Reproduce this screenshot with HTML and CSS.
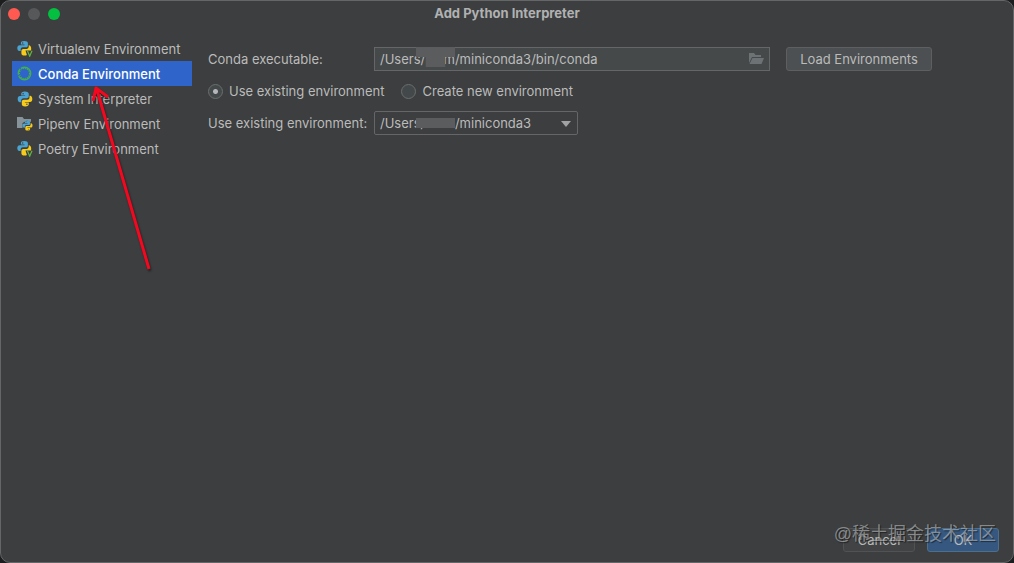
FILE: index.html
```
<!DOCTYPE html>
<html lang="en">
<head>
    <meta charset="UTF-8" />
    <meta name="viewport" content="width=device-width, initial-scale=1.0"/>
    <title>Add Python Interpreter</title>
    <link rel="stylesheet" href="styles.css">
</head>
<body>

    <!-- shared icon shapes -->
    <svg class="icon-defs" aria-hidden="true">
        <symbol id="python" viewBox="0 0 16 16">
            <path fill="#4aa3d0" d="M7.8.6C5.200.6 4.200 1.500 4.200 3v1.500h3.900v.6H3C1.500 5.100.7 6.400.7 8.100c0 1.800.8 3.200 2.200 3.200h1.300V9.600c0-1.300 1-2.300 2.300-2.300h3.300c1.200 0 2-.8 2-2V3C11.800 1.500 10.500.6 7.800.6z"/>
            <path fill="#f7cb1b" d="M8.200 15.400c2.600 0 3.600-.9 3.600-2.400v-1.500H7.900v-.6H13c1.500 0 2.300-1.300 2.300-3 0-1.800-.8-3.200-2.200-3.200h-.6v1.700c0 1.300-1 2.300-2.300 2.300H6.800c-1.200 0-2 .8-2 2V13c0 1.500.8 2.400 3.400 2.400z"/>
            <circle cx="6.100" cy="2.700" r=".7" fill="#3c3e3f"/>
            <circle cx="9.900" cy="13.300" r=".7" fill="#3c3e3f"/>
        </symbol>
        <symbol id="python-v" viewBox="0 0 16 16">
            <path fill="#4aa3d0" d="M7.200 0C4.700 0 3.900.9 3.900 2.200v1.400h3.600v.6H2.600C1.200 4.200.3 5.400.3 7c0 1.700.8 3 2.100 3h1.300V8.300c0-1.200.9-2.100 2.200-2.100h3.200c1.100 0 1.800-.8 1.800-1.800V2.200C10.900.8 9.700 0 7.200 0z"/>
            <path fill="#f7cb1b" d="M11.700 4.200v1.600c0 1.200-.9 2.200-2.200 2.200H6.300c-1.100 0-1.900.8-1.900 1.900v2.300c0 1.400 1 2.300 3.200 2.300.9 0 1.700-.1 2.300-.5L8.500 9.600h5.400c.2-.6.3-1.300.3-2.200 0-1.900-.9-3.200-2.500-3.200z"/>
            <circle cx="5.700" cy="2" r=".7" fill="#3c3e3f"/>
            <path fill="none" stroke="#62b543" stroke-width="1.200" d="M10.400 9.800l2.300 5.400L15 9.800"/>
        </symbol>
        <symbol id="conda" viewBox="0 0 16 16">
            <circle cx="7.500" cy="7.500" r="6.200" fill="none" stroke="#43b049" stroke-width="1.400"/>
            <circle cx="7.500" cy="7.500" r="5.200" fill="none" stroke="#43b049" stroke-width="1.400" stroke-dasharray="1.200 1"/>
            <path fill="none" stroke="#2f65ca" stroke-width="1" d="M3 2l1.500 2M1 9.500l2-.6"/>
        </symbol>
        <symbol id="pipenv" viewBox="0 0 16 16">
            <path fill="#87939a" d="M0 1h5.500L7 3h7v3L10 4.500 5.500 7v5H0z"/>
            <svg x="5" y="4" width="11" height="11"><use href="#python"/></svg>
        </symbol>
    </svg>

    <div class="dialog">
        <header class="titlebar">
            <div class="lights">
                <button class="light close" aria-label="Close"></button>
                <button class="light minimize" aria-label="Minimize" disabled></button>
                <button class="light zoom" aria-label="Zoom"></button>
            </div>
            <h1>Add Python Interpreter</h1>
        </header>

        <main class="content">
            <nav class="env-list">
                <a href="#virtualenv"><svg class="icon"><use href="#python-v"/></svg>Virtualenv Environment</a>
                <a href="#conda-env" class="selected"><svg class="icon"><use href="#conda"/></svg>Conda Environment</a>
                <a href="#system"><svg class="icon"><use href="#python"/></svg>System Interpreter</a>
                <a href="#pipenv-env"><svg class="icon"><use href="#pipenv"/></svg>Pipenv Environment</a>
                <a href="#poetry"><svg class="icon"><use href="#python-v"/></svg>Poetry Environment</a>
                <svg class="arrow" viewBox="0 0 70 190" aria-hidden="true">
                    <path d="M61 188L9 9M5 20L8 7l12 9"/>
                </svg>
            </nav>

            <form class="settings">
                <div class="row">
                    <label class="name" for="executable">Conda executable:</label>
                    <div class="field path">
                        <input type="text" id="executable" value="/Users/&nbsp;&nbsp;&nbsp;&nbsp;&nbsp;m/miniconda3/bin/conda">
                        <span class="smudge tall"></span>
                        <svg class="folder" viewBox="0 0 16 16" aria-hidden="true">
                            <path fill="#6d7375" d="M1 2h5l1.500 2H13v2H4l-3 6z"/>
                            <path fill="#6d7375" d="M4.500 7H16l-2.500 6H1.500z"/>
                        </svg>
                    </div>
                    <button type="button" class="button load">Load Environments</button>
                </div>

                <div class="row radios">
                    <label><input type="radio" name="mode" checked>Use existing environment</label>
                    <label><input type="radio" name="mode">Create new environment</label>
                </div>

                <div class="row">
                    <label class="name" for="existing">Use existing environment:</label>
                    <div class="field combo">
                        <select id="existing">
                            <option>/Users/&nbsp;&nbsp;&nbsp;&nbsp;&nbsp;m/miniconda3</option>
                        </select>
                        <span class="smudge"></span>
                        <svg class="caret" viewBox="0 0 10 6" aria-hidden="true"><path d="M0 0h10L5 6z"/></svg>
                    </div>
                </div>
            </form>
        </main>

        <footer class="actions">
            <button type="button" class="button cancel">Cancel</button>
            <button type="button" class="button ok">OK</button>
            <span class="watermark">@稀土掘金技术社区</span>
        </footer>
    </div>

</body>
</html>
```
FILE: styles.css
```
* {
    box-sizing: border-box;
}
body {
    margin: 0;
    background-color: #1c1d1e;
    color: #bbbbbb;
    font-family: Inter, "Liberation Sans", sans-serif;
    font-size: 13px;
}
button, input, select {
    font: inherit;
    color: inherit;
    margin: 0;
}
.icon-defs {
    display: none;
}
.dialog {
    display: flex;
    flex-direction: column;
    min-height: 100vh;
    background-color: #3c3e3f;
    border: 1px solid #646667;
    border-radius: 10px;
}

/* title bar */
.titlebar {
    display: grid;
    grid-template-columns: 1fr auto 1fr;
    align-items: center;
    height: 25px;
    padding: 0 7px;
}
.titlebar h1 {
    margin: 0;
    font-size: 13px;
    line-height: 17px;
    font-weight: 700;
    color: #b0b1b2;
}
.lights {
    display: flex;
    gap: 8px;
}
.light {
    width: 12px;
    height: 12px;
    padding: 0;
    border: 0;
    border-radius: 50%;
}
.close {
    background-color: #ff5a52;
}
.minimize {
    background-color: #575859;
}
.zoom {
    background-color: #03c040;
}

/* environment types */
.content {
    display: flex;
    flex: 1;
    gap: 16px;
    padding: 10px 81px 0 11px;
}
.env-list {
    position: relative;
    flex: none;
    width: 180px;
}
.env-list a {
    display: flex;
    align-items: center;
    gap: 5px;
    height: 25px;
    padding-left: 5px;
    color: inherit;
    text-decoration: none;
    white-space: nowrap;
}
.env-list .selected {
    background-color: #2f65ca;
    color: #ffffff;
    font-weight: 500;
}
.icon {
    width: 16px;
    height: 16px;
}
.arrow {
    position: absolute;
    left: 76px;
    top: 45px;
    width: 70px;
    height: 190px;
    pointer-events: none;
    filter: drop-shadow(1px 2px 1px rgba(0, 0, 0, 0.5));
}
.arrow path {
    fill: none;
    stroke: #f5081f;
    stroke-width: 3;
    stroke-linejoin: round;
}

/* settings */
.settings {
    display: flex;
    flex: 1;
    flex-direction: column;
    gap: 8px;
    padding-top: 11px;
}
.row {
    display: flex;
    align-items: center;
    height: 24px;
    white-space: nowrap;
}
.name {
    width: 166px;
}
.field {
    position: relative;
    height: 24px;
}
.path {
    flex: 1;
}
.field input, .field select {
    display: block;
    width: 100%;
    height: 24px;
    padding: 0 5px;
    border: 1px solid #646667;
    outline: none;
}
.field input {
    padding-right: 28px;
    background-color: #45494a;
}
.field select {
    appearance: none;
    border-radius: 2px;
    background-color: #3c3e3f;
}
.combo {
    width: 204px;
}
.smudge {
    position: absolute;
    left: 42px;
    top: 7px;
    width: 39px;
    height: 10px;
    background-color: #5a5c5d;
    pointer-events: none;
}
.smudge.tall {
    top: 0;
    height: 20px;
    clip-path: polygon(0 0, 100% 0, 100% 50%, 75% 50%, 75% 100%, 25% 100%, 25% 50%, 0 50%);
}
.folder {
    position: absolute;
    right: 6px;
    top: 4px;
    width: 16px;
    height: 16px;
}
.caret {
    position: absolute;
    right: 7px;
    top: 10px;
    width: 10px;
    height: 6px;
    fill: #a0a2a3;
    pointer-events: none;
}
.radios {
    gap: 17px;
}
.radios label {
    display: flex;
    align-items: center;
    gap: 6px;
}
.radios input {
    appearance: none;
    width: 15px;
    height: 15px;
    border: 1px solid #6b6d6e;
    border-radius: 50%;
    background-color: #43494a;
}
.radios input:checked {
    background-image: radial-gradient(circle, #b4b6b7 2px, transparent 3px);
}

/* buttons */
.button {
    height: 24px;
    padding: 0 12px;
    border: 1px solid #5e6060;
    border-radius: 3px;
    background-color: #4c5052;
}
.load {
    width: 146px;
    margin-left: 16px;
}
.actions {
    position: relative;
    display: flex;
    justify-content: flex-end;
    gap: 12px;
    padding: 0 14px 10px;
}
.actions .button {
    width: 72px;
}
.actions .cancel {
    background-color: #414344;
    border-color: #505253;
}
.actions .ok {
    background-color: #365880;
    border-color: #4c708c;
}
.watermark {
    position: absolute;
    right: 17px;
    bottom: 15px;
    font-family: "Liberation Sans", "Noto Sans CJK SC", sans-serif;
    font-size: 18px;
    line-height: 26px;
    color: rgba(190, 192, 194, 0.6);
    text-shadow: 1px 1px 1px rgba(0, 0, 0, 0.5);
    pointer-events: none;
}
```
